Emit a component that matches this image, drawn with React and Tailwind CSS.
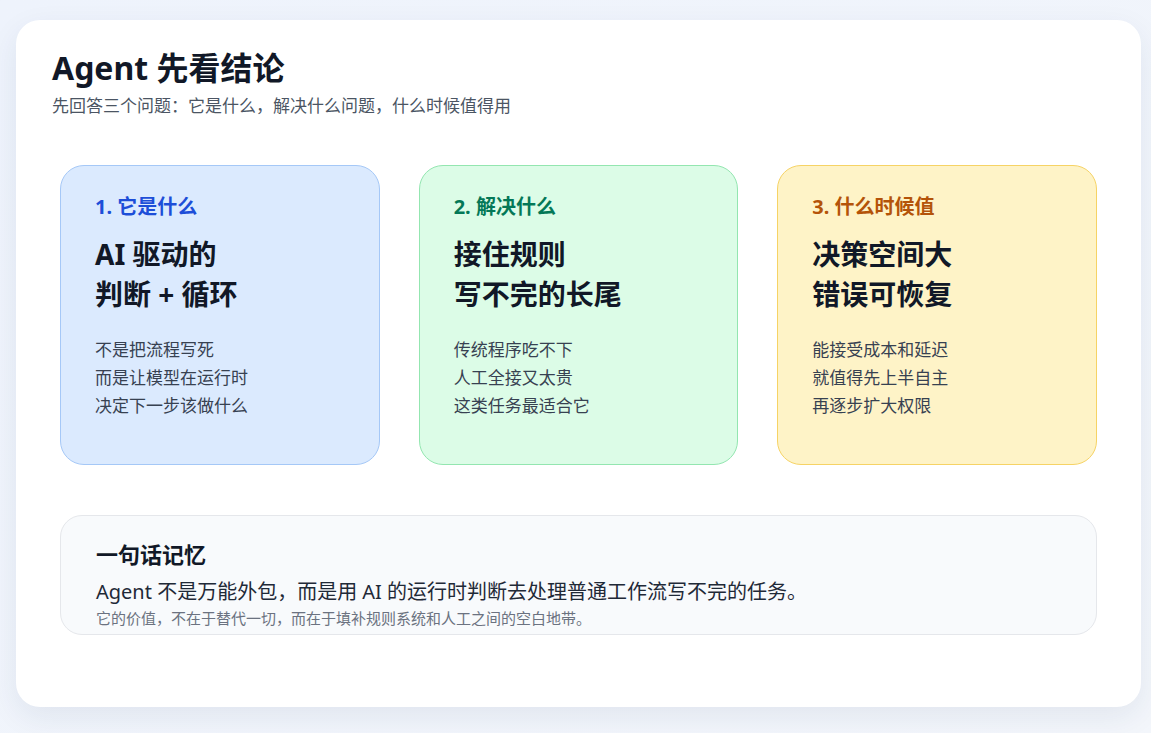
export default function App() {
  const f = { fontFamily: '"Noto Sans", "Noto Sans CJK SC", sans-serif' };
  const cards = [
    { n: "1. 它是什么", t: ["AI 驱动的", "判断 + 循环"], b: ["不是把流程写死", "而是让模型在运行时", "决定下一步该做什么"], c: "bg-[#dbeafe] border-[#a5c8f7]", l: "text-[#1d4ed8]" },
    { n: "2. 解决什么", t: ["接住规则", "写不完的长尾"], b: ["传统程序吃不下", "人工全接又太贵", "这类任务最适合它"], c: "bg-[#dcfce7] border-[#93e6b0]", l: "text-[#047857]" },
    { n: "3. 什么时候值", t: ["决策空间大", "错误可恢复"], b: ["能接受成本和延迟", "就值得先上半自主", "再逐步扩大权限"], c: "bg-[#fef3c7] border-[#f6d365]", l: "text-[#b45309]" },
  ];
  return (
    <div style={f} className="w-[1151px] h-[733px] bg-gradient-to-br from-[#eef3fc] to-[#f3f6fb] pt-[20px] pl-[16px] overflow-hidden">
      <div className="w-[1125px] h-[687px] bg-white rounded-[24px] shadow-[0_10px_30px_rgba(30,50,90,0.08)] pt-[26px] px-[36px]">
        <h1 className="text-[32px] leading-[44px] font-bold text-[#111827]">Agent 先看结论</h1>
        <p className="text-[17px] leading-[26px] text-[#4b5563] mt-[3px]">先回答三个问题：它是什么，解决什么问题，什么时候值得用</p>
        <div className="flex gap-[39px] mt-[46px] px-[8px]">
          {cards.map((c) => (
            <div key={c.n} className={`w-[320px] h-[300px] rounded-[24px] border ${c.c} pl-[34px] pt-[26px]`}>
              <div className={`text-[20px] leading-[30px] font-bold ${c.l}`}>{c.n}</div>
              <div className="text-[28px] leading-[40px] font-bold text-[#111827] mt-[12px]">
                {c.t.map((x) => <div key={x}>{x}</div>)}
              </div>
              <div className="text-[17px] leading-[28px] text-[#374151] mt-[22px]">
                {c.b.map((x) => <div key={x}>{x}</div>)}
              </div>
            </div>
          ))}
        </div>
        <div className="mx-[8px] mt-[50px] h-[120px] overflow-hidden rounded-[22px] border border-[#e5e7eb] bg-[#f8fafc] pl-[35px] pt-[22px]">
          <div className="text-[22px] leading-[32px] font-bold text-[#111827]">一句话记忆</div>
          <div className="text-[20px] leading-[30px] text-[#1f2937] mt-[7px]">Agent 不是万能外包，而是用 AI 的运行时判断去处理普通工作流写不完的任务。</div>
          <div className="text-[15px] leading-[24px] text-[#6b7280] mt-[-1px]">它的价值，不在于替代一切，而在于填补规则系统和人工之间的空白地带。</div>
        </div>
      </div>
    </div>
  );
}
